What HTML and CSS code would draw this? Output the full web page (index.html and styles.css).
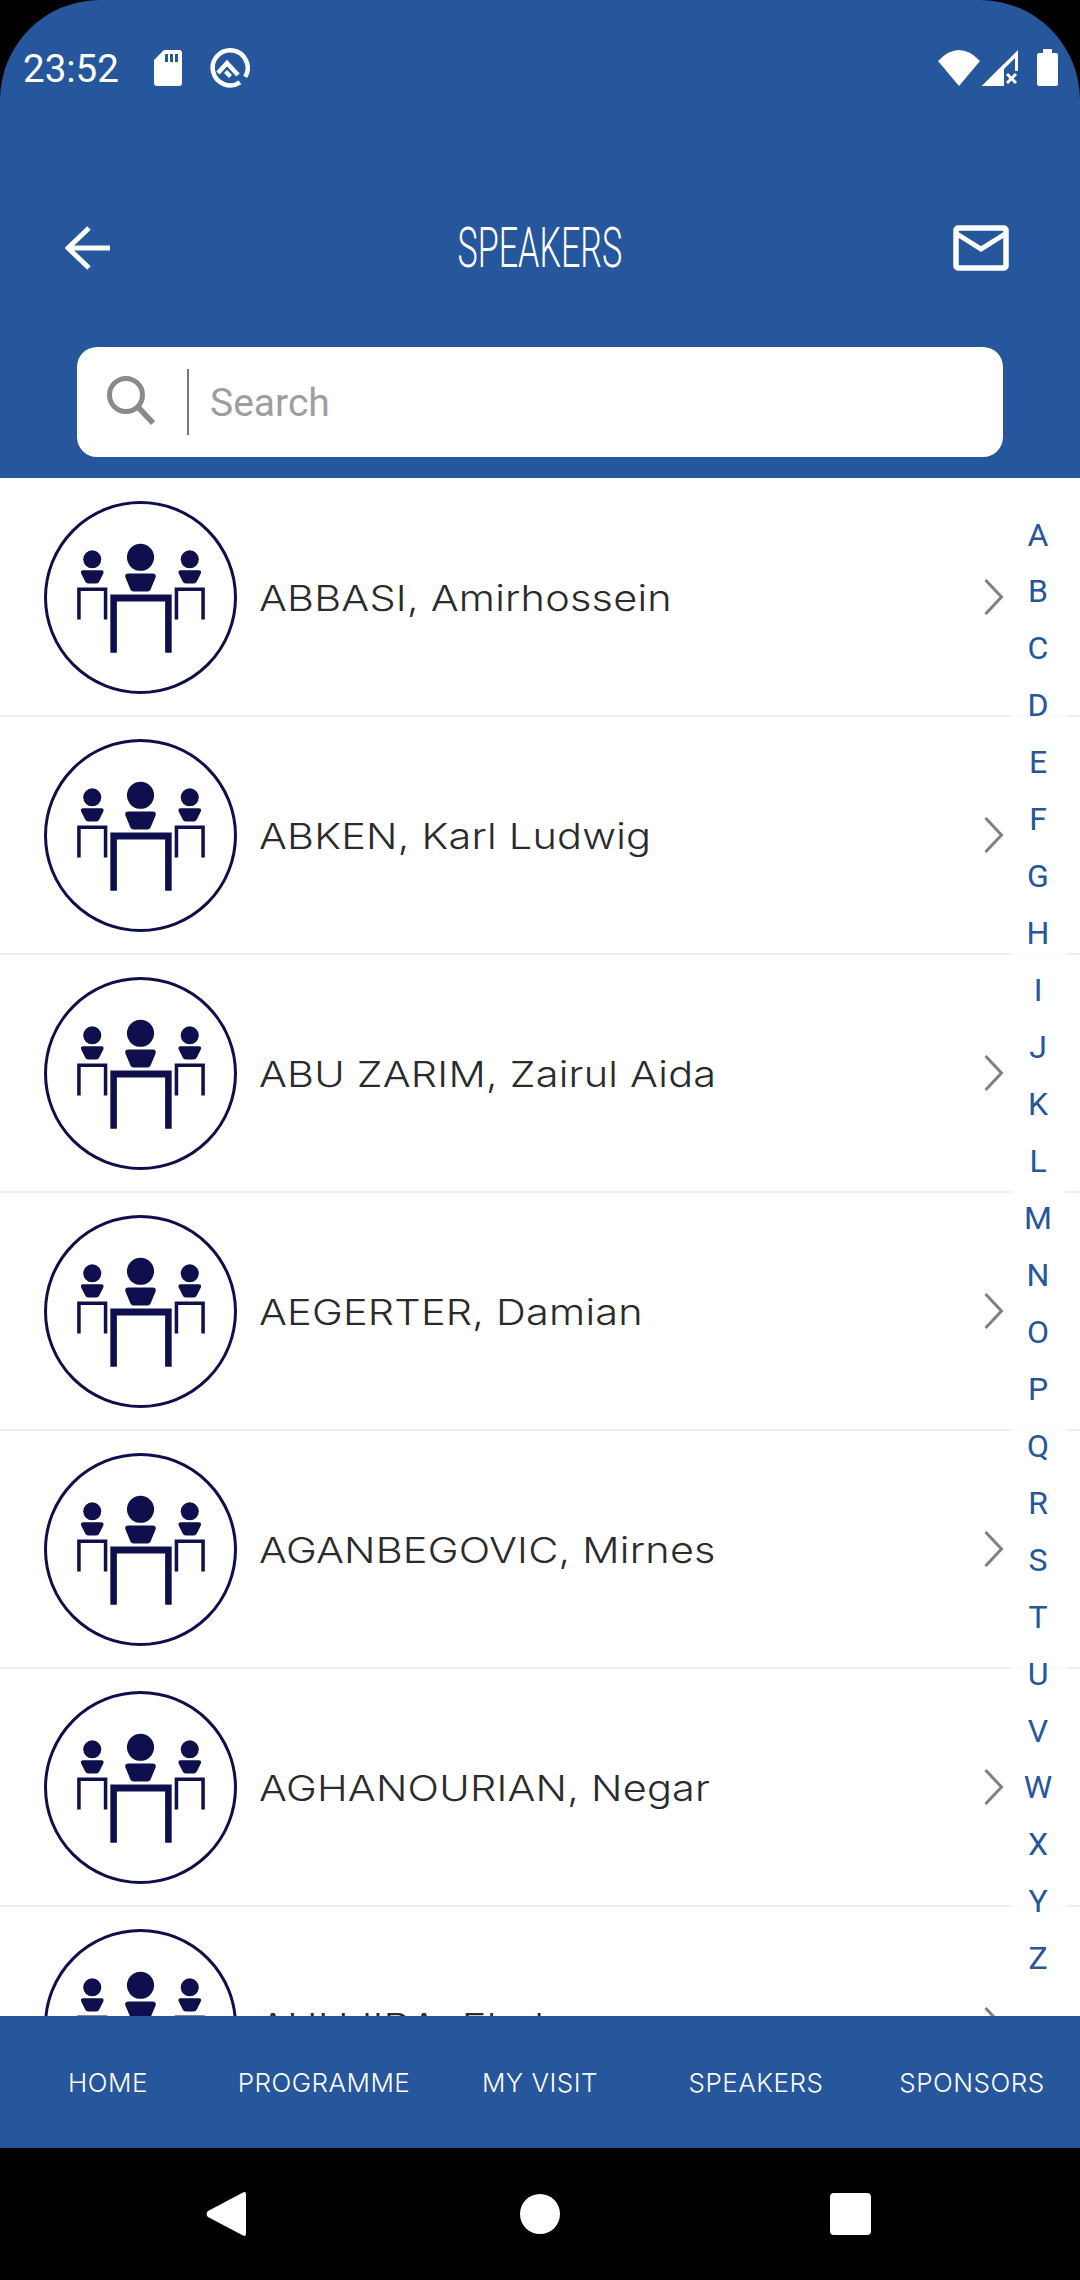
FILE: index.html
```html
<!DOCTYPE html>
<html lang="en">
  <head>
    <meta charset="UTF-8" />
    <meta name="viewport" content="width=device-width, initial-scale=1.0" />
    <title>Speakers</title>
    <link rel="stylesheet" href="styles.css">
  </head>
  <body>
    <svg class="defs" width="0" height="0">
      <symbol id="avatar" viewBox="0 0 192 192">
        <circle cx="96" cy="96" r="94.5" fill="none" stroke="#0e0f4c" stroke-width="3" />
        <circle cx="96" cy="56" r="13.5" fill="#0e0f4c" />
        <path d="M84 72h24q4 0 3 4l-5 12q-1 2-3 2h-14q-2 0-3-2l-5-12q-1-4 3-4z" fill="#0e0f4c" />
        <circle cx="48" cy="58" r="9" fill="#0e0f4c" />
        <path d="M39 69h18q3 0 2 3l-4 8q-1 2-3 2h-8q-2 0-3-2l-4-8q-1-3 2-3z" fill="#0e0f4c" />
        <circle cx="145" cy="58" r="9" fill="#0e0f4c" />
        <path d="M136 69h18q3 0 2 3l-4 8q-1 2-3 2h-8q-2 0-3-2l-4-8q-1-3 2-3z" fill="#0e0f4c" />
        <path d="M66 151V93h61v58h-6.500V100h-48v51z" fill="#0e0f4c" />
        <path d="M33 118V86h30v32h-3.500V89.500h-23V118z" fill="#0e0f4c" />
        <path d="M130 118V86h30v32h-3.500V89.500h-23V118z" fill="#0e0f4c" />
      </symbol>
    </svg>

    <div class="screen">
      <header class="header">
        <div class="status-bar">
          <span class="time">23:52</span>
          <svg class="icon-sd" viewBox="0 0 28 36">
            <path d="M10 0h15q3 0 3 3v30q0 3-3 3H3q-3 0-3-3V10z" fill="#fff" />
            <path d="M11 4h3v8h-3zM16 4h3v8h-3zM21 4h3v8h-3z" fill="#26569c" />
          </svg>
          <svg class="icon-q" viewBox="0 0 40 40">
            <path d="M30 34.300A17.500 17.500 0 1 1 35.200 28.800" fill="none" stroke="#fff" stroke-width="4.500" />
            <path d="M8 25l9-10 11 12" fill="none" stroke="#fff" stroke-width="4.500" />
            <path d="M17 22l5 5-3 3-5-5z" fill="#fff" />
          </svg>
          <span class="status-right">
            <svg class="icon-wifi" viewBox="0 0 42 36">
              <path d="M0 11Q21-11 42 11L21 36z" fill="#fff" />
            </svg>
            <svg class="icon-signal" viewBox="0 0 36 36">
              <path d="M0 36L36 0v21h-3V8L8 33h14v3z" fill="#fff" />
              <path d="M0 36L22 14v22z" fill="#fff" />
              <path d="M25 24l9 9M34 24l-9 9" stroke="#fff" stroke-width="3" />
            </svg>
            <svg class="icon-battery" viewBox="0 0 21 37">
              <path d="M6 0h9v4h4q2 0 2 2v29q0 2-2 2H2q-2 0-2-2V6q0-2 2-2h4z" fill="#fff" />
            </svg>
          </span>
        </div>

        <div class="toolbar">
          <svg class="icon-back" viewBox="0 0 45 44">
            <path d="M24 2L3 22l21 20M3 22h42" fill="none" stroke="#fff" stroke-width="5" />
          </svg>
          <h1 class="title">SPEAKERS</h1>
          <svg class="icon-mail" viewBox="0 0 56 46">
            <rect x="3" y="3" width="50" height="40" rx="2" fill="none" stroke="#fff" stroke-width="5.500" />
            <path d="M4 9l24 15L52 9" fill="none" stroke="#fff" stroke-width="5" />
          </svg>
        </div>

        <div class="search">
          <svg class="icon-search" viewBox="0 0 48 49">
            <circle cx="19" cy="19" r="16.500" fill="none" stroke="#8a8a8a" stroke-width="5" />
            <path d="M31 31l15 16" stroke="#8a8a8a" stroke-width="5.500" />
          </svg>
          <span class="search-divider"></span>
          <span class="search-placeholder">Search</span>
        </div>
      </header>

      <main class="content">
        <ul class="speaker-list">
          <li class="speaker">
            <svg class="avatar"><use href="#avatar" /></svg>
            <span class="speaker-name">ABBASI, Amirhossein</span>
            <svg class="chevron" viewBox="0 0 20 36"><path d="M1.500 1l16 17-16 17" /></svg>
          </li>
          <li class="speaker">
            <svg class="avatar"><use href="#avatar" /></svg>
            <span class="speaker-name">ABKEN, Karl Ludwig</span>
            <svg class="chevron" viewBox="0 0 20 36"><path d="M1.500 1l16 17-16 17" /></svg>
          </li>
          <li class="speaker">
            <svg class="avatar"><use href="#avatar" /></svg>
            <span class="speaker-name">ABU ZARIM, Zairul Aida</span>
            <svg class="chevron" viewBox="0 0 20 36"><path d="M1.500 1l16 17-16 17" /></svg>
          </li>
          <li class="speaker">
            <svg class="avatar"><use href="#avatar" /></svg>
            <span class="speaker-name">AEGERTER, Damian</span>
            <svg class="chevron" viewBox="0 0 20 36"><path d="M1.500 1l16 17-16 17" /></svg>
          </li>
          <li class="speaker">
            <svg class="avatar"><use href="#avatar" /></svg>
            <span class="speaker-name">AGANBEGOVIC, Mirnes</span>
            <svg class="chevron" viewBox="0 0 20 36"><path d="M1.500 1l16 17-16 17" /></svg>
          </li>
          <li class="speaker">
            <svg class="avatar"><use href="#avatar" /></svg>
            <span class="speaker-name">AGHANOURIAN, Negar</span>
            <svg class="chevron" viewBox="0 0 20 36"><path d="M1.500 1l16 17-16 17" /></svg>
          </li>
          <li class="speaker">
            <svg class="avatar"><use href="#avatar" /></svg>
            <span class="speaker-name">AHUJIRA, Ehab</span>
            <svg class="chevron" viewBox="0 0 20 36"><path d="M1.500 1l16 17-16 17" /></svg>
          </li>
        </ul>

        <!-- alphabet index sits over the list -->
        <div class="alpha-index">
          <span>A</span><span>B</span><span>C</span><span>D</span><span>E</span><span>F</span><span>G</span>
          <span>H</span><span>I</span><span>J</span><span>K</span><span>L</span><span>M</span><span>N</span>
          <span>O</span><span>P</span><span>Q</span><span>R</span><span>S</span><span>T</span><span>U</span>
          <span>V</span><span>W</span><span>X</span><span>Y</span><span>Z</span>
        </div>
      </main>

      <nav class="tabs">
        <span>HOME</span>
        <span>PROGRAMME</span>
        <span>MY VISIT</span>
        <span>SPEAKERS</span>
        <span>SPONSORS</span>
      </nav>

      <div class="soft-keys">
        <svg class="key-back" viewBox="0 0 40 46">
          <path d="M37 1.500q3-1.500 3 2v39q0 3.500-3 2L2 26q-3-3 0-6z" fill="#fff" />
        </svg>
        <span class="key-home"></span>
        <span class="key-recent"></span>
      </div>
    </div>
  </body>
</html>
```

FILE: styles.css
```css
/* Global Styles */
html,
body {
  margin: 0;
  padding: 0;
  background: #000000;
}
body {
  font-family: "Roboto", sans-serif;
}
.defs {
  position: absolute;
}
.screen {
  width: 1080px;
  height: 2280px;
  display: flex;
  flex-direction: column;
  overflow: hidden;
}

/* Header */
.header {
  height: 478px;
  flex: none;
  background: #26569c;
  border-radius: 100px 100px 0 0;
  color: #ffffff;
}
.status-bar {
  height: 100px;
  padding: 48px 22px 0 23px;
  box-sizing: border-box;
  display: flex;
  align-items: flex-start;
}
.time {
  font-size: 38.5px;
  line-height: 42px;
  width: 131px;
}
.icon-sd {
  width: 28px;
  height: 36px;
  margin-top: 2px;
  margin-right: 28px;
}
.icon-q {
  width: 40px;
  height: 40px;
}
.status-right {
  margin-left: auto;
  display: flex;
  align-items: flex-start;
}
.icon-wifi {
  width: 42px;
  height: 36px;
  margin-top: 2px;
  margin-right: 2px;
}
.icon-signal {
  width: 36px;
  height: 36px;
  margin-top: 2px;
  margin-right: 19px;
}
.icon-battery {
  width: 21px;
  height: 37px;
  margin-top: 1px;
}
.toolbar {
  height: 116px;
  margin-top: 90px;
  padding: 0 71px;
  display: grid;
  grid-template-columns: 1fr auto 1fr;
  align-items: center;
}
.icon-back {
  width: 45px;
  height: 44px;
  margin-left: -6px;
}
.icon-mail {
  width: 56px;
  height: 46px;
  justify-self: end;
}
.title {
  margin: 0;
  font-size: 55px;
  font-weight: 300;
  line-height: 60px;
  transform: scaleX(0.62);
}

/* Search box */
.search {
  margin: 41px 77px 0;
  height: 110px;
  background: #ffffff;
  border-radius: 20px;
  display: flex;
  align-items: center;
  padding-left: 30px;
}
.icon-search {
  width: 48px;
  height: 49px;
  margin-top: -4px;
  flex: none;
}
.search-divider {
  width: 2px;
  height: 66px;
  margin-left: 32px;
  background: #6d7a8c;
}
.search-placeholder {
  margin-left: 21px;
  padding-top: 2px;
  font-size: 39px;
  color: #9e9e9e;
}

/* Speaker list */
.content {
  flex: 1;
  position: relative;
  overflow: hidden;
  background: #ffffff;
}
.speaker-list {
  list-style: none;
  margin: 0;
  padding: 1px 0 0;
}
.speaker {
  height: 238px;
  box-sizing: border-box;
  border-bottom: 2px solid #eeeeee;
  padding: 0 76px 0 44px;
  display: flex;
  align-items: center;
}
.avatar {
  width: 193px;
  height: 193px;
  flex: none;
}
.speaker-name {
  margin-left: 22px;
  padding-top: 2px;
  flex: 1;
  font-family: "Inter", sans-serif;
  font-size: 36px;
  font-weight: 300;
  letter-spacing: 0.2px;
  color: #2b2b2b;
  white-space: nowrap;
  transform: scaleX(1.15);
  transform-origin: left center;
}
.chevron {
  width: 20px;
  height: 36px;
  flex: none;
  fill: none;
  stroke: #808080;
  stroke-width: 3;
}

/* A-Z index */
.alpha-index {
  position: absolute;
  top: 0;
  bottom: 0;
  right: 14px;
  width: 56px;
  padding-top: 28.500px;
  box-sizing: border-box;
  background: rgba(255, 255, 255, 0.75);
  display: flex;
  flex-direction: column;
  align-items: center;
}
.alpha-index span {
  height: 56.96px;
  line-height: 56.96px;
  font-size: 32px;
  color: #26569c;
}

/* Bottom tabs */
.tabs {
  height: 132px;
  flex: none;
  background: #26569c;
  display: flex;
  align-items: center;
}
.tabs span {
  flex: 1;
  text-align: center;
  font-family: "Inter", sans-serif;
  font-size: 26px;
  font-weight: 300;
  letter-spacing: 0.5px;
  color: #ffffff;
}

/* Android soft keys */
.soft-keys {
  height: 132px;
  flex: none;
  background: #000000;
  display: flex;
  align-items: center;
  padding-left: 206px;
  box-sizing: border-box;
}
.key-back {
  width: 40px;
  height: 46px;
}
.key-home {
  width: 40px;
  height: 40px;
  margin-left: 274px;
  border-radius: 50%;
  background: #ffffff;
}
.key-recent {
  width: 41px;
  height: 42px;
  margin-left: 270px;
  border-radius: 4px;
  background: #ffffff;
}
```
